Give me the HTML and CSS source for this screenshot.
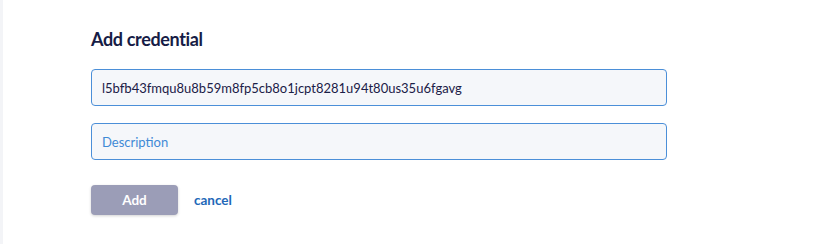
FILE: index.html
```html
<!DOCTYPE html>
<html>
<head>
<meta charset="utf-8">
<link rel="stylesheet" href="styles.css">
</head>
<body>
<div class="page">
  <div class="rail"></div>
  <main class="panel">
    <h2 class="title">Add credential</h2>
    <form class="form">
      <input class="field" type="text" value="l5bfb43fmqu8u8b59m8fp5cb8o1jcpt8281u94t80us35u6fgavg">
      <input class="field" type="text" placeholder="Description">
      <div class="actions">
        <button class="btn" type="button">Add</button>
        <a class="cancel" href="#">cancel</a>
      </div>
    </form>
  </main>
</div>
</body>
</html>
```
FILE: styles.css
```css
html, body {
  margin: 0;
  padding: 0;
  background: #ffffff;
}
body {
  font-family: "Lato", "Open Sans", sans-serif;
}
.page {
  display: flex;
  width: 837px;
  height: 244px;
}
.rail {
  width: 3px;
  background: #f3f4f7;
}
.panel {
  padding: 26px 0 0 88px;
}
.title {
  margin: 0;
  font-size: 18px;
  font-weight: 700;
  letter-spacing: -0.35px;
  color: #161c46;
  line-height: 26px;
}
.form {
  margin-top: 17px;
  display: flex;
  flex-direction: column;
  gap: 17px;
  width: 576px;
}
.field {
  box-sizing: border-box;
  height: 37px;
  width: 576px;
  border: 1px solid #4b8fd8;
  border-radius: 4px;
  background: #f5f7fa;
  padding: 0 10px;
  font-family: inherit;
  font-size: 13px;
  color: #1b2047;
  outline: none;
}
.field::placeholder {
  color: #3f8ad6;
  opacity: 1;
}
.actions {
  display: flex;
  align-items: center;
  gap: 16px;
  margin-top: 8px;
}
.btn {
  width: 87px;
  height: 30px;
  border: none;
  border-radius: 4px;
  background: #9b9db7;
  color: #ffffff;
  font-family: inherit;
  font-weight: 700;
  font-size: 13.5px;
  box-shadow: 0 1px 3px rgba(0,0,0,0.18);
}
.cancel {
  color: #2268b8;
  font-weight: 700;
  font-size: 13.5px;
  text-decoration: none;
}
```
